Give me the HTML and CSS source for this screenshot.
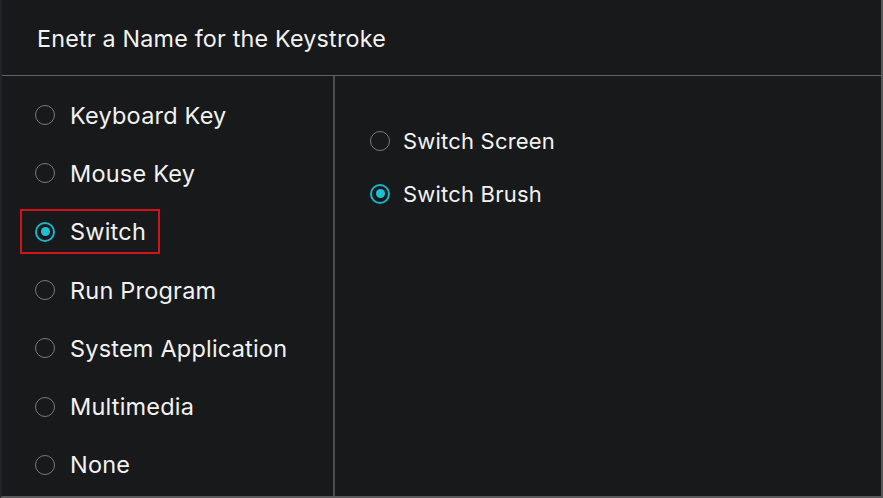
FILE: index.html
```html
<!DOCTYPE html>
<html>
<head>
<meta charset="utf-8">
<link rel="stylesheet" href="styles.css">
</head>
<body>
<div class="dialog">
  <div class="header">Enetr a Name for the Keystroke</div>
  <div class="body">
    <div class="left">
      <div class="row"><span class="opt"><span class="radio"></span><span class="text">Keyboard Key</span></span></div>
      <div class="row"><span class="opt"><span class="radio"></span><span class="text">Mouse Key</span></span></div>
      <div class="row"><span class="opt focused"><span class="radio checked"></span><span class="text">Switch</span></span></div>
      <div class="row"><span class="opt"><span class="radio"></span><span class="text">Run Program</span></span></div>
      <div class="row"><span class="opt"><span class="radio"></span><span class="text">System Application</span></span></div>
      <div class="row"><span class="opt"><span class="radio"></span><span class="text">Multimedia</span></span></div>
      <div class="row"><span class="opt"><span class="radio"></span><span class="text">None</span></span></div>
    </div>
    <div class="right">
      <div class="subrow"><span class="radio"></span><span class="subtext">Switch Screen</span></div>
      <div class="subrow"><span class="radio checked"></span><span class="subtext">Switch Brush</span></div>
    </div>
  </div>
</div>
</body>
</html>
```
FILE: styles.css
```css
* { box-sizing: border-box; }
html, body {
  margin: 0;
  padding: 0;
  background: #18191b;
}
body {
  font-family: Inter, "Noto Sans", sans-serif;
  color: #f2f2f2;
}
.dialog {
  width: 883px;
  height: 498px;
  background: #18191b;
  border-left: 2px solid #222326;
  border-right: 2px solid #5a5a5c;
  border-bottom: 2px solid #5a5a5c;
  display: flex;
  flex-direction: column;
}
.header {
  height: 76px;
  flex: none;
  border-bottom: 1px solid #626264;
  padding-left: 35px;
  padding-top: 2px;
  display: flex;
  align-items: center;
  font-size: 23.3px;
  letter-spacing: 0.2px;
}
.body {
  flex: 1;
  display: flex;
}
.left {
  width: 333px;
  flex: none;
  border-right: 2px solid #4e4e50;
  padding-top: 10px;
  padding-left: 18px;
}
.row {
  height: 58.3px;
  display: flex;
  align-items: center;
}
.opt {
  display: inline-flex;
  align-items: center;
  gap: 15px;
  padding: 8px 12px 8px 13px;
  border: 2px solid transparent;
  line-height: 25px;
}
.opt.focused {
  border-color: #d3131b;
}
.text {
  font-size: 23.5px;
  letter-spacing: 0.2px;
}
.subtext {
  font-size: 22px;
  letter-spacing: 0.2px;
}
.radio {
  width: 20px;
  height: 20px;
  border-radius: 50%;
  border: 1.5px solid #7a7a7c;
  flex: none;
  display: flex;
  align-items: center;
  justify-content: center;
}
.radio.checked {
  border: 2px solid #1bb3c8;
}
.radio.checked::after {
  content: "";
  width: 9px;
  height: 9px;
  border-radius: 50%;
  background: #1ec0d6;
}
.right {
  flex: 1;
  padding-top: 38px;
  padding-left: 35px;
}
.subrow {
  height: 53px;
  display: flex;
  align-items: center;
  gap: 13px;
}
```
